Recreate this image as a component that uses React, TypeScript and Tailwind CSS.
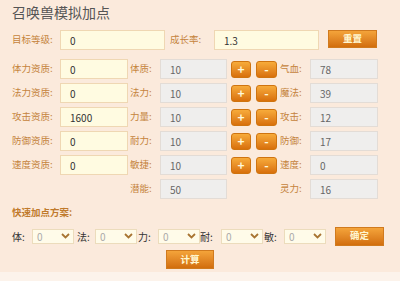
import React from "react";

const font = { fontFamily: '"Noto Sans CJK SC", "Microsoft YaHei", sans-serif' };

function Label({ text, w, className = "" }: { text: string; w: string; className?: string }) {
  return (
    <div className={`${w} shrink-0 text-[9.5px] leading-none text-[#c5843d] ${className}`}>{text}</div>
  );
}

function YInput({ value, w }: { value: string; w: string }) {
  return (
    <div className={`${w} h-[20px] shrink-0 border border-[#efd7b3] bg-[#fffbe1] pl-[9px] flex items-center text-[10px] text-[#333]`}>
      {value}
    </div>
  );
}

function GBox({ value, w }: { value: string; w: string }) {
  return (
    <div className={`${w} h-[20px] shrink-0 border border-[#e3dcd6] bg-[#efeeed] pl-[9px] flex items-center text-[10px] text-[#666]`}>
      {value}
    </div>
  );
}

function SmallBtn({ ch, w, ml }: { ch: string; w: string; ml: string }) {
  return (
    <div
      className={`${w} ${ml} h-[17px] shrink-0 rounded-[3px] border border-[#cf7410] bg-gradient-to-b from-[#f7ab3a] to-[#d8700a] flex items-center justify-center text-[#fff8dc] text-[12px] font-bold leading-none`}
    >
      {ch}
    </div>
  );
}

function OBtn({ text, w, h }: { text: string; w: string; h: string }) {
  return (
    <div
      className={`${w} ${h} shrink-0 border border-[#d07a1e] bg-gradient-to-b from-[#f4a43a] to-[#d26e0c] flex items-center justify-center text-[#fff6d0] text-[9.5px] font-bold leading-none`}
    >
      {text}
    </div>
  );
}

function Sel() {
  return (
    <div className="w-[42px] h-[15px] shrink-0 border border-[#ecdcbc] bg-[#fffbe9] pl-[4px] pr-[3px] flex items-center justify-between text-[10px] text-[#aaa]">
      <span>0</span>
      <svg width="9" height="6" viewBox="0 0 9 6">
        <path d="M1 1 L4.5 4.5 L8 1" stroke="#a87432" strokeWidth="1.8" fill="none" />
      </svg>
    </div>
  );
}

const rows = [
  { l: "体力资质:", v: "0", m: "体质:", mv: "10", r: "气血:", rv: "78" },
  { l: "法力资质:", v: "0", m: "法力:", mv: "10", r: "魔法:", rv: "39" },
  { l: "攻击资质:", v: "1600", m: "力量:", mv: "10", r: "攻击:", rv: "12" },
  { l: "防御资质:", v: "0", m: "耐力:", mv: "10", r: "防御:", rv: "17" },
  { l: "速度资质:", v: "0", m: "敏捷:", mv: "10", r: "速度:", rv: "0" },
];

export default function App() {
  return (
    <div className="w-[400px] h-[281px] bg-[#fbeadc] flex flex-col overflow-hidden" style={font}>
      <div className="h-[272px] flex flex-col">
        <div className="h-[30px] pl-[12px] pt-[2px] text-[14px] leading-[20px] text-[#555]">召唤兽模拟加点</div>
        <div className="h-[20px] pl-[12px] flex items-center">
          <Label text="目标等级:" w="w-[48px]" />
          <YInput value="0" w="w-[105px]" />
          <Label text="成长率:" w="w-[44px]" className="ml-[5px]" />
          <YInput value="1.3" w="w-[105px]" />
          <div className="ml-[9px] -mt-[2px]">
            <OBtn text="重置" w="w-[49px]" h="h-[18px]" />
          </div>
        </div>
        <div className="mt-[9px] flex flex-col gap-[4px]">
          {rows.map((r) => (
            <div key={r.l} className="h-[20px] pl-[12px] flex items-center">
              <Label text={r.l} w="w-[48px]" />
              <YInput value={r.v} w="w-[68px]" />
              <Label text={r.m} w="w-[30px]" className="ml-[2px]" />
              <GBox value={r.mv} w="w-[67px]" />
              <SmallBtn ch="+" w="w-[20px]" ml="ml-[4px]" />
              <SmallBtn ch="-" w="w-[21px]" ml="ml-[5px]" />
              <Label text={r.r} w="w-[30px]" className="ml-[3px]" />
              <GBox value={r.rv} w="w-[68px]" />
            </div>
          ))}
          <div className="h-[20px] pl-[130px] flex items-center">
            <Label text="潜能:" w="w-[30px]" />
            <GBox value="50" w="w-[67px]" />
            <div className="w-[53px] shrink-0" />
            <Label text="灵力:" w="w-[30px]" />
            <GBox value="16" w="w-[68px]" />
          </div>
        </div>
        <div className="mt-[8px] pl-[12px] h-[10px] flex items-center text-[9.5px] font-bold text-[#c07a2c]">
          快速加点方案:
        </div>
        <div className="mt-[9px] pl-[12px] h-[20px] flex items-center text-[10px] text-[#333]">
          <span className="w-[20px] shrink-0">体:</span>
          <Sel />
          <span className="w-[21px] shrink-0 pl-[3px]">法:</span>
          <Sel />
          <span className="w-[21px] shrink-0 pl-[1px]">力:</span>
          <Sel />
          <span className="w-[21px] shrink-0">耐:</span>
          <Sel />
          <span className="w-[21px] shrink-0 pl-[1px]">敏:</span>
          <Sel />
          <div className="ml-[9px]">
            <OBtn text="确定" w="w-[49px]" h="h-[19px]" />
          </div>
        </div>
        <div className="mt-[4px] pl-[166px]">
          <OBtn text="计算" w="w-[48px]" h="h-[19px]" />
        </div>
      </div>
      <div className="flex-1 bg-[#fcf3eb]" />
    </div>
  );
}
